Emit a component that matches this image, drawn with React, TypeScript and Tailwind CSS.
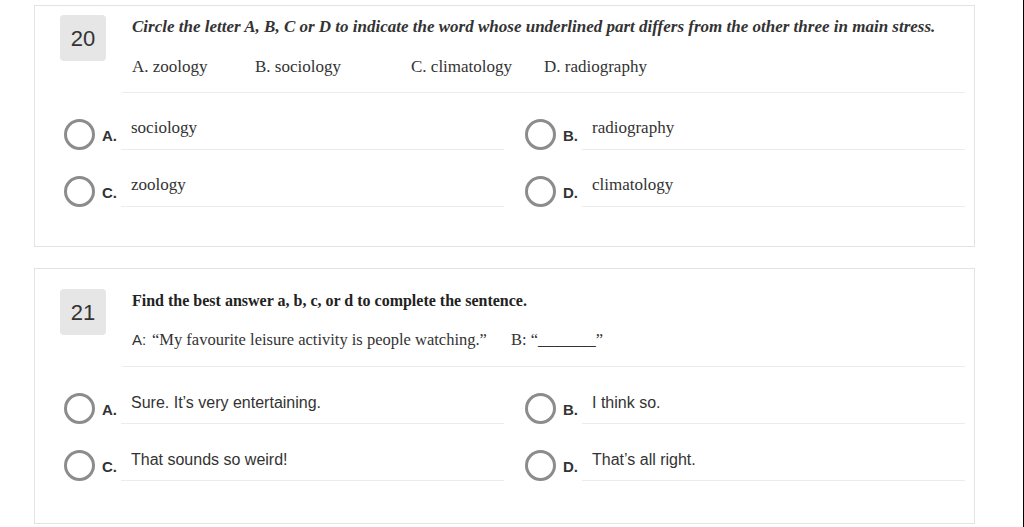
import React from "react";

const serif = { fontFamily: '"Liberation Serif", "Times New Roman", serif' };
const sans = { fontFamily: '"Liberation Sans", Arial, sans-serif' };

type Opt = { letter: string; text: string; sansText?: boolean };

function Option({ o }: { o: Opt }) {
  return (
    <div className="flex items-start">
      <div className="w-[31px] h-[31px] rounded-full border-[3px] border-[#8c8c8c] shrink-0 mt-[1px]" />
      <div
        className="w-[26px] pl-[7px] pt-[9px] text-[15px] leading-[18px] font-bold text-[#333] shrink-0"
        style={sans}
      >
        {o.letter}.
      </div>
      <div
        className={
          "flex-1 h-[32px] border-b border-[#ececec] pl-[10px] text-[#333] " +
          (o.sansText ? "text-[16px] leading-[20px] pt-[1px]" : "text-[17px] leading-[20px]")
        }
        style={o.sansText ? sans : serif}
      >
        {o.text}
      </div>
    </div>
  );
}

function Card({
  num,
  pt,
  pb,
  mt,
  lines,
  opts,
}: {
  num: string;
  pt: string;
  pb: string;
  mt: string;
  lines: React.ReactNode;
  opts: Opt[];
}) {
  return (
    <div className={"ml-[34px] w-[941px] border border-[#e3e3e3] bg-white " + pt + " " + pb}>
      <div className="flex pl-[25px] pr-[9px]">
        <div
          className="w-[46px] h-[46px] shrink-0 rounded-[4px] bg-[#e6e6e6] flex items-center justify-center text-[22px] text-[#333] mt-[-1px]"
          style={sans}
        >
          {num}
        </div>
        <div className="flex-1 ml-[16px] border-b border-[#ececec] pl-[10px]">{lines}</div>
      </div>
      <div className={"grid grid-cols-2 gap-x-[21px] gap-y-[25px] pl-[29px] pr-[9px] " + mt}>
        {opts.map((o) => (
          <Option key={o.letter} o={o} />
        ))}
      </div>
    </div>
  );
}

export default function App() {
  return (
    <div className="w-[1024px] h-[527px] bg-white flex overflow-hidden">
      <div className="flex-1 pt-[5px]">
        <Card
          num="20"
          pt="pt-[10px]"
          pb="pb-[39px]"
          mt="mt-[25px]"
          lines={
            <div className="text-[#333]" style={serif}>
              <div className="text-[17px] leading-[22px] font-bold italic whitespace-nowrap">
                Circle the letter A, B, C or D to indicate the word whose underlined part differs from the other three in main stress.
              </div>
              <div className="flex text-[17px] leading-[22px] mt-[18px] pb-[14px]">
                <span className="w-[123px]">A. zoology</span>
                <span className="w-[156px]">B. sociology</span>
                <span className="w-[133px]">C. climatology</span>
                <span>D. radiography</span>
              </div>
            </div>
          }
          opts={[
            { letter: "A", text: "sociology" },
            { letter: "B", text: "radiography" },
            { letter: "C", text: "zoology" },
            { letter: "D", text: "climatology" },
          ]}
        />
        <div className="h-[21px]" />
        <Card
          num="21"
          pt="pt-[21px]"
          pb="pb-[42px]"
          mt="mt-[25px]"
          lines={
            <div className="text-[#333]" style={serif}>
              <div className="text-[16px] leading-[22px] font-bold text-[#222]">
                Find the best answer a, b, c, or d to complete the sentence.
              </div>
              <div className="flex text-[16.5px] leading-[22px] mt-[17px] pb-[15px]">
                <span style={sans} className="text-[15px] w-[20px]">A:</span>
                <span className="w-[359px]">“My favourite leisure activity is people watching.”</span>
                <span>B: “_______”</span>
              </div>
            </div>
          }
          opts={[
            { letter: "A", text: "Sure. It’s very entertaining.", sansText: true },
            { letter: "B", text: "I think so.", sansText: true },
            { letter: "C", text: "That sounds so weird!", sansText: true },
            { letter: "D", text: "That’s all right.", sansText: true },
          ]}
        />
      </div>
      <div className="w-[1px] bg-black" />
    </div>
  );
}
